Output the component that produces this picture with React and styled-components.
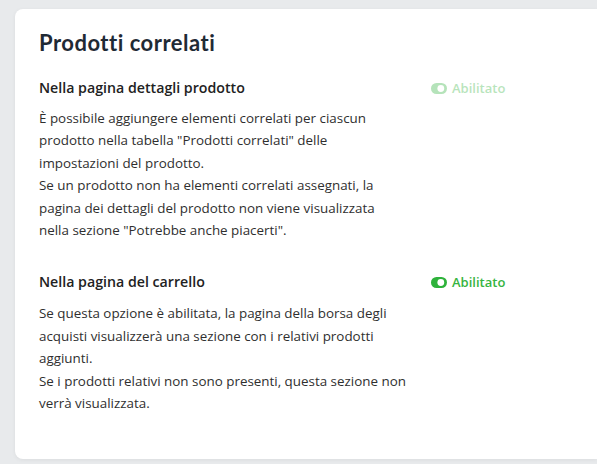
import React from 'react';
import styled, { createGlobalStyle } from 'styled-components';

const Global = createGlobalStyle`
  html, body {
    margin: 0;
    padding: 0;
    background: #e8eaec;
    overflow: hidden;
  }
`;

const Page = styled.div`
  padding: 9px 0 0 15px;
  height: 464px;
  box-sizing: border-box;
`;

const Card = styled.div`
  width: 582px;
  background: #fff;
  border-radius: 8px 0 0 8px;
  box-shadow: 0 1px 4px rgba(0, 0, 0, 0.06);
  padding: 20px 24px 45px;
  box-sizing: border-box;
  font-family: "Open Sans", "Noto Sans", sans-serif;
  color: #333;
`;

const Title = styled.h1`
  margin: 0 0 20px;
  font-family: Lato, "Noto Sans", sans-serif;
  font-weight: 700;
  font-size: 22px;
  line-height: 28px;
  color: #1f2a35;
  letter-spacing: 0.5px;
`;

const Section = styled.div`
  display: grid;
  grid-template-columns: 392px auto;
  & + & {
    margin-top: 30px;
  }
`;

const Heading = styled.h2`
  margin: 0 0 ${p => p.$gap}px;
  font-size: 14.2px;
  font-weight: 600;
  line-height: 22px;
  color: #222;
`;

const Text = styled.p`
  margin: 0;
  font-size: 13.4px;
  line-height: 22.4px;
  color: #2f2f2f;
  white-space: nowrap;
`;

const Status = styled.div`
  display: flex;
  align-items: center;
  gap: 5px;
  height: 22px;
  font-size: 13px;
  font-weight: 600;
  color: #36b441;
  opacity: ${p => (p.$faded ? 0.35 : 1)};
`;

function ToggleOn() {
  return (
    <svg width="16" height="11" viewBox="0 0 16 11">
      <rect x="0" y="0" width="16" height="11" rx="5.5" fill="#2eb23b" />
      <circle cx="9.8" cy="5.5" r="3.4" fill="#fff" />
    </svg>
  );
}

function Block({ title, lines, faded, gap }) {
  return (
    <Section>
      <div>
        <Heading $gap={gap}>{title}</Heading>
        <Text>
          {lines.map((l, i) => (
            <React.Fragment key={i}>
              {i > 0 && <br />}
              {l}
            </React.Fragment>
          ))}
        </Text>
      </div>
      <Status $faded={faded}>
        <ToggleOn />
        Abilitato
      </Status>
    </Section>
  );
}

export default function App() {
  return (
    <Page>
      <Global />
      <Card>
        <Title>Prodotti correlati</Title>
        <Block
          title="Nella pagina dettagli prodotto"
          faded
          gap={8}
          lines={[
            'È possibile aggiungere elementi correlati per ciascun',
            'prodotto nella tabella "Prodotti correlati" delle',
            'impostazioni del prodotto.',
            'Se un prodotto non ha elementi correlati assegnati, la',
            'pagina dei dettagli del prodotto non viene visualizzata',
            'nella sezione "Potrebbe anche piacerti".',
          ]}
        />
        <Block
          title="Nella pagina del carrello"
          gap={9}
          lines={[
            'Se questa opzione è abilitata, la pagina della borsa degli',
            'acquisti visualizzerà una sezione con i relativi prodotti',
            'aggiunti.',
            'Se i prodotti relativi non sono presenti, questa sezione non',
            'verrà visualizzata.',
          ]}
        />
      </Card>
    </Page>
  );
}
